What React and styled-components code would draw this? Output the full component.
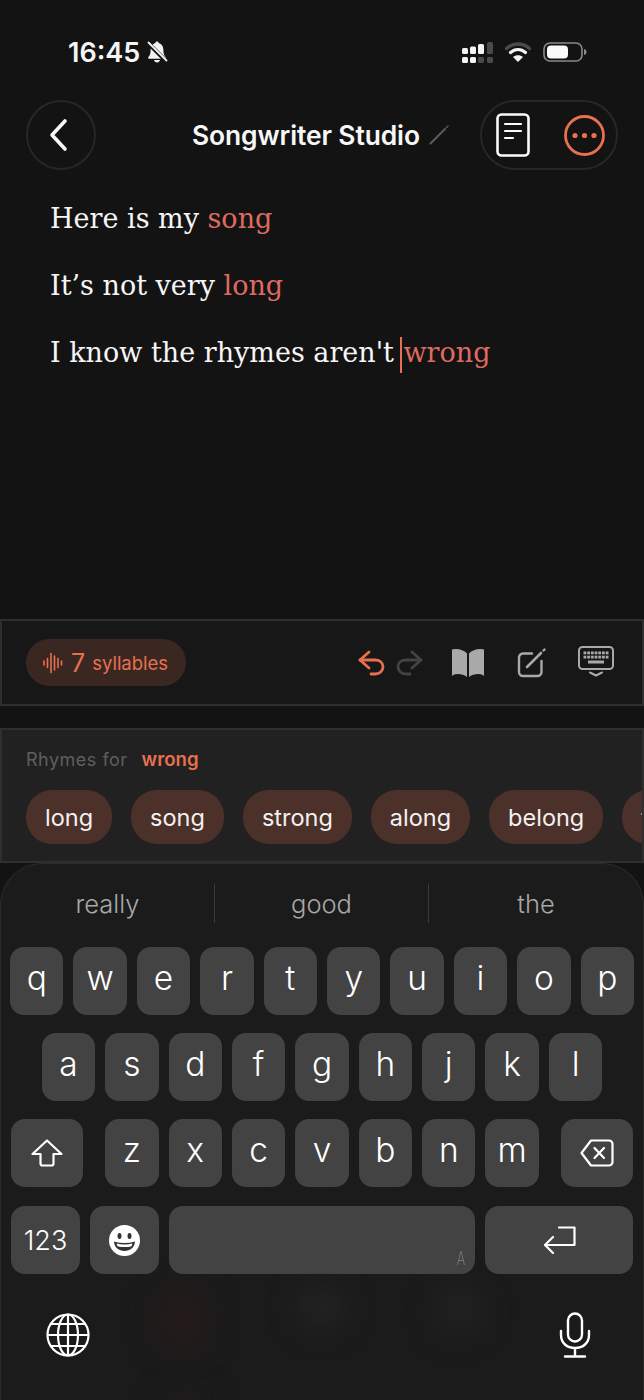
import React from "react";
import styled, { createGlobalStyle } from "styled-components";

const Global = createGlobalStyle`
  html, body { margin: 0; padding: 0; background: #141314; }
  * { box-sizing: border-box; }
`;
const ui = `Inter, "Noto Sans", "Liberation Sans", sans-serif`;
const orange = "#e8704f";

const Page = styled.div`
  position: relative; width: 644px; height: 1400px; overflow: hidden;
  background: #141314; display: flex; flex-direction: column; font-family: ${ui}; color: #fff;
`;
const StatusBar = styled.div`
  height: 100px; padding: 4px 57px 0 68px; display: flex; align-items: center; justify-content: space-between;
`;
const StatusLeft = styled.div`display: flex; align-items: center; gap: 5px;`;
const Time = styled.span`font-size: 27px; font-weight: 600; color: #f5f5f5;`;
const StatusRight = styled.div`display: flex; align-items: center; gap: 12px;`;
const Header = styled.header`
  height: 70px; padding: 0 26px; display: flex; align-items: center;
`;
const RoundButton = styled.button`
  width: 70px; height: 70px; border-radius: 50%; border: 2px solid #272727; background: transparent;
  display: flex; align-items: center; justify-content: center; padding: 0 4px 0 0;
`;
const TitleGroup = styled.div`
  margin-left: 96px; display: flex; align-items: center; gap: 9px; flex: 1;
`;
const Title = styled.h1`margin: 0; font-size: 26.4px; font-weight: 600; color: #f7f7f7; letter-spacing: -0.1px;`;
const ActionPill = styled.div`
  width: 138px; height: 70px; border-radius: 35px; border: 2px solid #272727;
  display: flex; align-items: center; padding-left: 14px; gap: 34px;
`;
const Editor = styled.main`
  height: 449px; padding: 15px 0 0 50px; font-family: "DejaVu Serif", "Liberation Serif", serif;
  font-size: 27px; color: #f6f6f6;
`;
const Line = styled.div`height: 67px; line-height: 67px; white-space: nowrap;`;
const Rhyme = styled.span`color: #df6a60;`;
const Caret = styled.span`
  display: inline-block; width: 2.5px; height: 36px; background: ${orange}; vertical-align: middle; margin: 0 1px 0 6px;
`;
const Toolbar = styled.section`
  height: 87px; border: 2px solid #2e2e2e; background: #171717; padding: 0 28px 0 24px;
  display: flex; align-items: center; justify-content: space-between;
`;
const SyllablePill = styled.div`
  width: 160px; height: 47px; border-radius: 24px; background: #3b2722; color: ${orange};
  display: flex; align-items: center; padding-left: 17px;
`;
const Count = styled.span`font-size: 25px; margin-left: 8px; font-weight: 400;`;
const CountLabel = styled.span`font-size: 18.5px; margin-left: 7px;`;
const ToolGroup = styled.div`display: flex; align-items: center;`;
const Tool = styled.span`display: flex; margin-left: ${p => p.$gap || 0}px; margin-top: ${p => p.$top || 0}px;`;
const RhymesPanel = styled.section`
  margin-top: 22px; height: 135px; background: #212121; border: 2px solid #2f2f2f;
  padding: 0 0 0 24px; overflow: hidden;
`;
const RhymesLabel = styled.div`
  height: 60px; padding-bottom: 2px; display: flex; align-items: center; gap: 14px; font-size: 18px; color: #5f5f5f; letter-spacing: .5px;
`;
const RhymeWord = styled.b`color: ${orange}; font-weight: 600; letter-spacing: 0; font-size: 18.6px;`;
const Chips = styled.div`display: flex; gap: 19px; white-space: nowrap;`;
const Chip = styled.span`
  flex: none; height: 54px; border-radius: 26px; background: #4c312b; color: #f4f1f0; font-size: 23.5px;
  padding: 0 19px; display: flex; align-items: center;
`;
const Keyboard = styled.section`
  position: relative; flex: 1; background: #1b1b1b; border: 1.5px solid #2c2c2c; border-bottom: 0;
  border-radius: 42px 42px 0 0; overflow: hidden;
`;
const Glow = styled.div`
  position: absolute; top: ${p => p.$top}px; left: ${p => p.$left}px; width: ${p => p.$w}px; height: ${p => p.$h}px;
  background: ${p => p.$c}; filter: blur(14px); border-radius: 40%;
`;
const Suggestions = styled.div`
  position: relative; height: 83px; display: grid; grid-template-columns: 213px 214px 1fr; padding-top: 20px;
`;
const Suggestion = styled.div`
  height: 39px; display: flex; align-items: center; justify-content: center; font-size: 25.5px; font-weight: 350; color: #a8a8a8;
  border-left: ${p => p.$divider ? "1.5px solid #3a3a3a" : "0"};
`;
const Rows = styled.div`position: relative; display: flex; flex-direction: column; gap: 18px; padding: 0 10px;`;
const Row = styled.div`
  display: flex; gap: 10px; justify-content: ${p => p.$split ? "space-between" : "center"};
  margin-top: ${p => p.$shift || 0}px;
`;
const KeyGroup = styled.div`display: flex; gap: 10px;`;
const Key = styled.div`
  position: relative; flex: none; width: ${p => p.$w || 53.4}px; height: 68px; border-radius: 14px; background: #434343;
  display: flex; align-items: center; justify-content: center; color: #fff; font-weight: 350; font-size: ${p => p.$size || 33.5}px;
  padding-bottom: 6px;
`;
const IconKey = styled(Key)`padding-bottom: 0;`;
const LangHint = styled.span`
  position: absolute; right: 8px; bottom: 5px; font-size: 18px; line-height: 20px; color: #777; transform: scaleX(.7);
`;
const BottomBar = styled.div`
  position: relative; display: flex; justify-content: space-between; align-items: center; padding: 38px 52px 0 45px;
`;

const I = {
  Bell: () => (
    <svg width="24" height="24" viewBox="0 0 24 24" fill="#f2f2f2">
      <path d="M12 1.5c-1 0-1.6.7-1.7 1.5C7.2 3.8 5.6 6.5 5.6 10c0 3.6-.6 5.3-2.3 7.2-.5.6-.2 1.5.7 1.5h16c.9 0 1.200-.9.7-1.500-1.700-1.900-2.300-3.600-2.300-7.200 0-3.500-1.600-6.200-4.700-7-.1-.8-.700-1.500-1.700-1.500z" />
      <path d="M9 20h6c-.3 1.500-1.500 2.500-3 2.500S9.300 21.500 9 20z" />
      <path d="M2.500 2.500 L21.500 21.500" stroke="#141314" strokeWidth="4" />
      <path d="M3.500 2.500 L21.500 20.500" stroke="#f2f2f2" strokeWidth="1.800" strokeLinecap="round" />
    </svg>
  ),
  Signal: () => (
    <svg width="31" height="21" viewBox="0 0 31 21">
      <g fill="#f4f4f4">
        <rect x="0" y="6" width="6" height="6" rx="1.500" />
        <rect x="8" y="4.500" width="6" height="7.500" rx="1.500" />
        <rect x="16" y="2" width="6" height="10" rx="1.500" />
        <rect x="0" y="15" width="6" height="6" rx="1.500" />
        <rect x="8" y="15" width="6" height="6" rx="1.500" />
      </g>
      <g fill="#4a4a4a">
        <rect x="25" y="0" width="6" height="12" rx="1.500" />
        <rect x="16" y="15" width="6" height="6" rx="1.500" />
        <rect x="25" y="15" width="6" height="6" rx="1.500" />
      </g>
    </svg>
  ),
  Wifi: () => (
    <svg width="26" height="20" viewBox="0 0 26 20">
      <path d="M1.500 6.500C8 .5 18 .5 24.500 6.500" fill="none" stroke="#4a4a4a" strokeWidth="3.400" strokeLinecap="round" />
      <path d="M5.500 10.500c4.500-4 10.500-4 15 0" fill="none" stroke="#f4f4f4" strokeWidth="3.200" strokeLinecap="round" />
      <path d="M13 20l-5-5c3-2.400 7-2.400 10 0z" fill="#f4f4f4" />
    </svg>
  ),
  Battery: () => (
    <svg width="44" height="20" viewBox="0 0 44 20">
      <rect x="1" y="1" width="38" height="18" rx="6" fill="none" stroke="#8a8a8a" strokeWidth="1.600" />
      <rect x="4" y="3.500" width="21" height="13" rx="4" fill="#fafafa" />
      <path d="M41 7c1.800.4 2.500 1.500 2.500 3s-.7 2.600-2.500 3z" fill="#8a8a8a" />
    </svg>
  ),
  Back: () => (
    <svg width="24" height="36" viewBox="0 0 24 36" fill="none" stroke="#f7f7f7" strokeWidth="3.600" strokeLinecap="round" strokeLinejoin="round">
      <path d="M18 4 5 18l13 14" />
    </svg>
  ),
  Pencil: () => (
    <svg width="20" height="20" viewBox="0 0 20 20" fill="none">
      <path d="M1.500 18.500 16 4" stroke="#5a5a5a" strokeWidth="2.200" strokeLinecap="round" />
      <path d="M17.500 2.500 19 1" stroke="#5a5a5a" strokeWidth="1.500" strokeLinecap="round" />
    </svg>
  ),
  Doc: () => (
    <svg width="34" height="44" viewBox="0 0 34 44" fill="none" stroke="#fbfbfb" strokeLinecap="round">
      <rect x="1.500" y="1.500" width="31" height="41" rx="4" strokeWidth="2.600" />
      <path d="M9 11h16M9 18h16M9 25h8" strokeWidth="2.200" />
    </svg>
  ),
  More: () => (
    <svg width="41" height="41" viewBox="0 0 41 41">
      <circle cx="20.500" cy="20.500" r="19" fill="none" stroke={orange} strokeWidth="2.800" />
      <circle cx="11" cy="20.500" r="2.600" fill={orange} /><circle cx="20.500" cy="20.500" r="2.600" fill={orange} /><circle cx="30" cy="20.500" r="2.600" fill={orange} />
    </svg>
  ),
  Wave: () => (
    <svg width="20" height="22" viewBox="0 0 20 22" stroke={orange} strokeWidth="1.600" strokeLinecap="round">
      <path d="M1 9v4M4.500 6.500v9M8 1.500v19M11.500 4v14M15 6.500v9M18.500 9v4" />
    </svg>
  ),
  Undo: ({ flip, color }) => (
    <svg width="27" height="26" viewBox="0 0 27 26" fill="none" stroke={color} strokeWidth="2.800" strokeLinecap="round" strokeLinejoin="round" style={flip ? { transform: "scaleX(-1)" } : undefined}>
      <path d="M11 2 2 10l9 8" />
      <path d="M2 10h15c4.500 0 8 2.700 8 6.800S21.500 24 17 24h-4" />
    </svg>
  ),
  Book: () => (
    <svg width="34" height="28" viewBox="0 0 34 28" fill="#a9a9a9">
      <path d="M16 4.500C13.500 1.500 9 0 5 0 3.500 0 2 .2 1 .6V27c1.200-1.300 3-2 5.500-2 3.700 0 7.500 1 9.500 3z" />
      <path d="M18 4.500C20.500 1.500 25 0 29 0c1.500 0 3 .2 4 .6V27c-1.200-1.300-3-2-5.500-2-3.700 0-7.500 1-9.500 3z" />
    </svg>
  ),
  Compose: () => (
    <svg width="30" height="30" viewBox="0 0 30 30" fill="none" stroke="#a9a9a9" strokeLinecap="round">
      <path d="M15 5.500H6a4 4 0 0 0-4 4V24a4 4 0 0 0 4 4h14.500a4 4 0 0 0 4-4V13" strokeWidth="2.400" />
      <path d="M10 19 24 5" strokeWidth="2.600" />
      <path d="M26.500 2.500l1 -1" strokeWidth="2.400" />
    </svg>
  ),
  KeyboardHide: () => (
    <svg width="36" height="31" viewBox="0 0 36 31" fill="none">
      <rect x="1" y="1" width="34" height="22" rx="3.500" stroke="#a9a9a9" strokeWidth="2" />
      <g fill="#a9a9a9">
        {[5.5, 9.2, 12.9, 16.6, 20.3, 24, 27.7].map(x => <rect key={x} x={x} y="5.500" width="2.800" height="2.800" />)}
        {[5.5, 9.2, 12.9, 16.6, 20.3, 24, 27.7].map(x => <rect key={x} x={x} y="9.700" width="2.800" height="2.800" />)}
        <rect x="10" y="14.500" width="16" height="3" />
      </g>
      <path d="M12 26.500l6 3 6-3" stroke="#a9a9a9" strokeWidth="2" strokeLinecap="round" strokeLinejoin="round" />
    </svg>
  ),
  Shift: () => (
    <svg width="32" height="28" viewBox="0 0 32 28" fill="none" stroke="#fff" strokeWidth="2.200" strokeLinejoin="round">
      <path d="M16 1.500 1.500 15h8v9.500a2 2 0 0 0 2 2h9a2 2 0 0 0 2-2V15h8z" />
    </svg>
  ),
  Delete: () => (
    <svg width="34" height="28" viewBox="0 0 34 28" fill="none" stroke="#fff" strokeWidth="2.200" strokeLinejoin="round" strokeLinecap="round">
      <path d="M11 1.500h18a3.500 3.500 0 0 1 3.500 3.500v18a3.500 3.500 0 0 1-3.500 3.500H11L1.500 14z" />
      <path d="M14.500 9l9.500 10M24 9l-9.500 10" />
    </svg>
  ),
  Smile: () => (
    <svg width="31" height="31" viewBox="0 0 31 31">
      <circle cx="15.500" cy="15.500" r="15.500" fill="#fff" />
      <ellipse cx="10.500" cy="11" rx="2" ry="3" fill="#333" />
      <ellipse cx="20.500" cy="11" rx="2" ry="3" fill="#333" />
      <path d="M5 16.500c3.500 1 7 1.500 10.500 1.500S22.500 17.500 26 16.500c-.3 6-5 9.500-10.500 9.500S5.300 22.500 5 16.500z" fill="#333" />
      <path d="M7.500 18.500c5 1.300 11 1.300 16 0-.4 1.700-1 2.500-1.500 3-4 .8-9 .8-13 0-.5-.5-1.100-1.300-1.500-3z" fill="#fff" />
    </svg>
  ),
  Return: () => (
    <svg width="33" height="28" viewBox="0 0 33 28" fill="none" stroke="#fff" strokeWidth="2.200" strokeLinecap="round" strokeLinejoin="round">
      <path d="M16 1.500h15.500V19H2" />
      <path d="M10 11 2 19l8 8" />
    </svg>
  ),
  Globe: () => (
    <svg width="44" height="44" viewBox="0 0 44 44" fill="none" stroke="#fff" strokeWidth="2.200">
      <circle cx="22" cy="22" r="20.500" />
      <ellipse cx="22" cy="22" rx="10" ry="20.500" />
      <path d="M22 1.500v41M1.500 22h41M5 11h34M5 33h34" />
    </svg>
  ),
  Mic: () => (
    <svg width="32" height="46" viewBox="0 0 32 46" fill="none" stroke="#fff" strokeWidth="2.400" strokeLinecap="round">
      <rect x="9" y="1.500" width="14" height="28" rx="7" />
      <path d="M2 19v4c0 8 6 13 14 13s14-5 14-13v-4M16 36v8M6 44.500h20" />
    </svg>
  ),
};

const rows = ["qwertyuiop", "asdfghjkl"];
const third = "zxcvbnm";
const chips = ["long", "song", "strong", "along", "belong", "throng"];

export default function App() {
  return (
    <Page>
      <Global />
      <StatusBar>
        <StatusLeft><Time>16:45</Time><I.Bell /></StatusLeft>
        <StatusRight><I.Signal /><I.Wifi /><I.Battery /></StatusRight>
      </StatusBar>
      <Header>
        <RoundButton aria-label="Back"><I.Back /></RoundButton>
        <TitleGroup><Title>Songwriter Studio</Title><I.Pencil /></TitleGroup>
        <ActionPill><I.Doc /><I.More /></ActionPill>
      </Header>
      <Editor>
        <Line>Here is my <Rhyme>song</Rhyme></Line>
        <Line>It’s not very <Rhyme>long</Rhyme></Line>
        <Line>I know the rhymes aren't<Caret /><Rhyme>wrong</Rhyme></Line>
      </Editor>
      <Toolbar>
        <SyllablePill><I.Wave /><Count>7</Count><CountLabel>syllables</CountLabel></SyllablePill>
        <ToolGroup>
          <Tool><I.Undo color={orange} /></Tool>
          <Tool $gap={11}><I.Undo flip color="#434343" /></Tool>
          <Tool $gap={28}><I.Book /></Tool>
          <Tool $gap={32}><I.Compose /></Tool>
          <Tool $gap={31} $top={-3}><I.KeyboardHide /></Tool>
        </ToolGroup>
      </Toolbar>
      <RhymesPanel>
        <RhymesLabel>Rhymes for <RhymeWord>wrong</RhymeWord></RhymesLabel>
        <Chips>{chips.map(c => <Chip key={c}>{c}</Chip>)}</Chips>
      </RhymesPanel>
      <Keyboard>
        <Glow $left={155} $top={422} $w={52} $h={65} $c="#241b1a" />
        <Glow $left={298} $top={422} $w={44} $h={42} $c="#232323" />
        <Glow $left={436} $top={422} $w={44} $h={46} $c="#222222" />
        <Glow $left={160} $top={530} $w={50} $h={8} $c="#241b1a" />
        <Suggestions>
          <Suggestion>really</Suggestion>
          <Suggestion $divider>good</Suggestion>
          <Suggestion $divider>the</Suggestion>
        </Suggestions>
        <Rows>
          {rows.map(r => (
            <Row key={r}>{[...r].map(k => <Key key={k}>{k}</Key>)}</Row>
          ))}
          <Row $split>
            <IconKey $w={72}><I.Shift /></IconKey>
            <KeyGroup>{[...third].map(k => <Key key={k}>{k}</Key>)}</KeyGroup>
            <IconKey $w={72}><I.Delete /></IconKey>
          </Row>
          <Row $split $shift={1}>
            <IconKey $w={69} $size={27}>123</IconKey>
            <IconKey $w={69}><I.Smile /></IconKey>
            <IconKey $w={306}><LangHint>A</LangHint></IconKey>
            <IconKey $w={148}><I.Return /></IconKey>
          </Row>
        </Rows>
        <BottomBar><I.Globe /><I.Mic /></BottomBar>
      </Keyboard>
    </Page>
  );
}
